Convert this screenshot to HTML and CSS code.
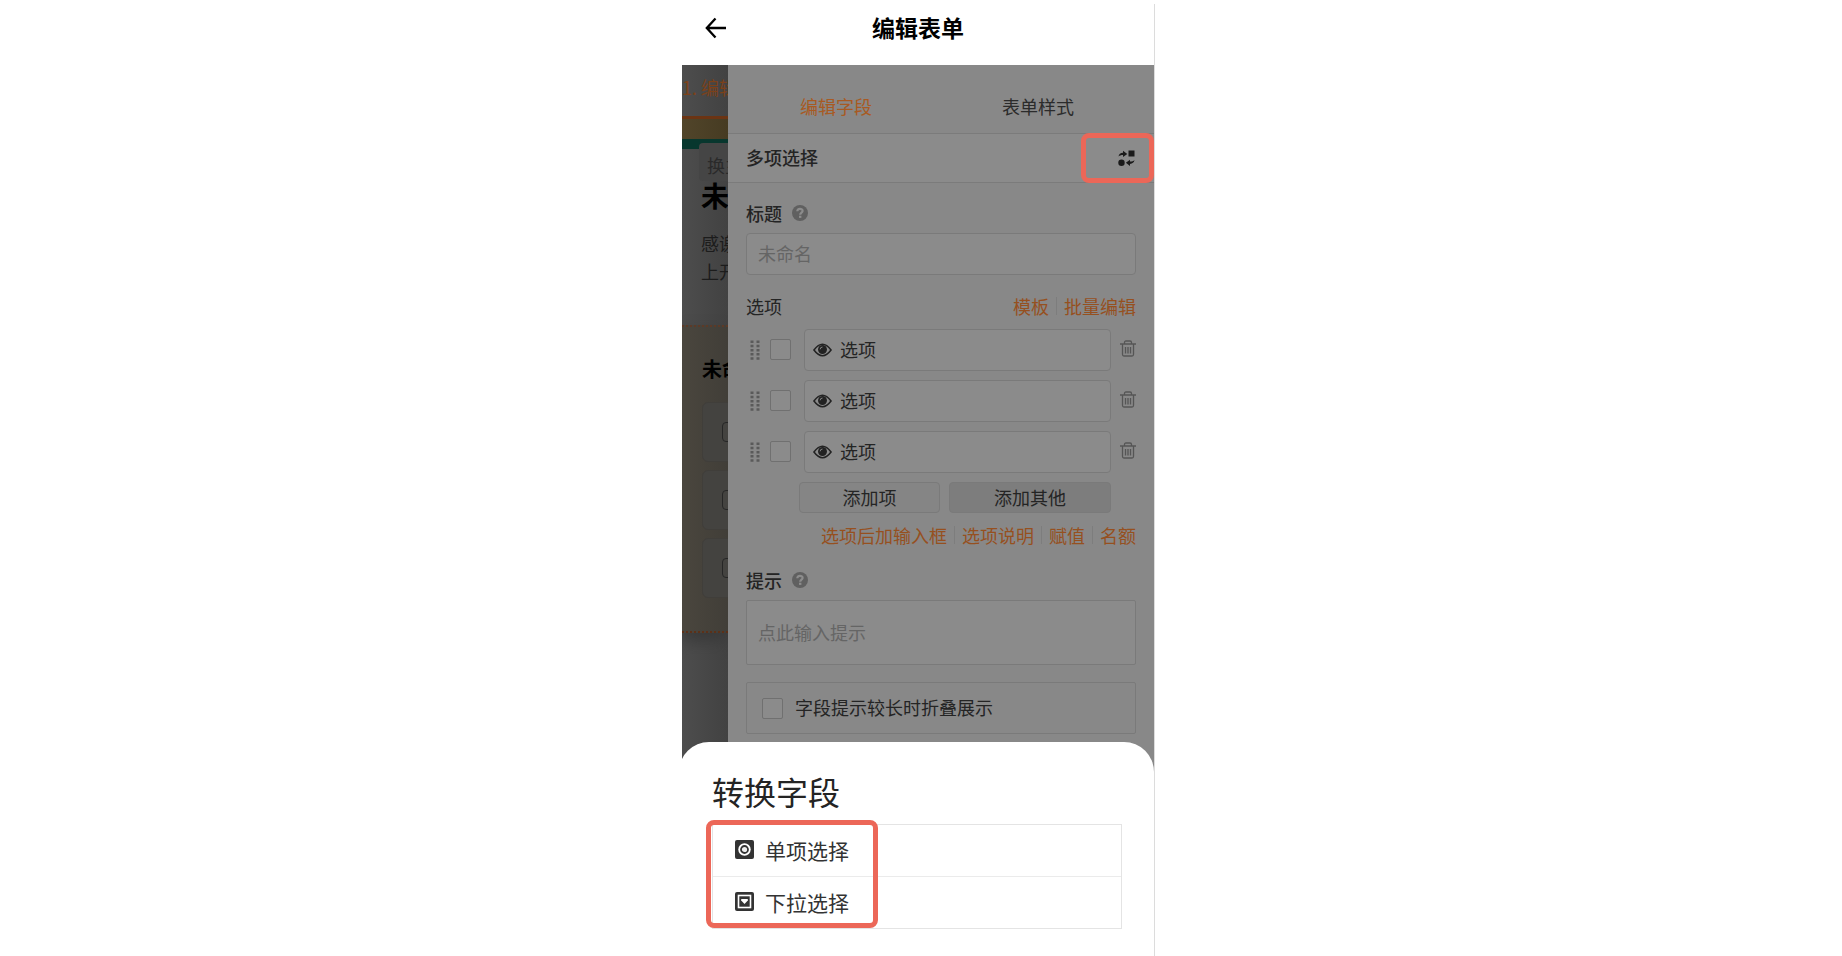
FILE: index.html
```
<!DOCTYPE html>
<html lang="zh-CN">
<head>
  <meta charset="UTF-8">
  <title>编辑表单</title>
  <meta name="viewport" content="width=device-width, initial-scale=1.0">
  <link rel="stylesheet" href="styles.css">
</head>
<body>

<!-- 公用图标 -->
<svg class="sprite" aria-hidden="true">
  <symbol id="i-help" viewBox="0 0 16 16">
    <circle cx="8" cy="8" r="8" fill="#606060"/>
    <path d="M5.300 6.200C5.300 3 10.700 3.200 10.600 6C10.500 7.600 8.200 7.700 8.200 9.700" fill="none" stroke="#8c8c8c" stroke-width="2.200"/>
    <rect x="7" y="10.700" width="2.400" height="2.200" fill="#8c8c8c"/>
  </symbol>
  <symbol id="i-drag" viewBox="0 0 10 20">
    <path d="M2 .5V20M8 .5V20" stroke="#5a5a5a" stroke-width="3" stroke-dasharray="2.500 1.700"/>
  </symbol>
  <symbol id="i-eye" viewBox="0 0 20 14">
    <path d="M1 7Q10-5 19 7Q10 19 1 7Z" fill="none" stroke="#222" stroke-width="1.600"/>
    <circle cx="10" cy="6.500" r="4.700" fill="#222"/>
    <path d="M7.500 6.300Q7.500 4 10 3.900" fill="none" stroke="#8a8a8a" stroke-width="1"/>
  </symbol>
  <symbol id="i-trash" viewBox="0 0 16 17">
    <path d="M0 4H16M4.500 4V2.500Q4.500 1 6 1H10Q11.500 1 11.500 2.500V4M2.500 4V14.500Q2.500 16 4 16H12Q13.500 16 13.500 14.500V4M5.500 7V13.500M8 7V13.500M10.500 7V13.500" fill="none" stroke="#555" stroke-width="1.300"/>
  </symbol>
</svg>

<div class="phone">
  <header class="header">
    <button class="back" type="button" aria-label="返回">
      <svg width="21" height="22" viewBox="0 0 21 22"><path d="M10.500 1.500L1.800 11L10.500 20.500M2 11H21" fill="none" stroke="#000" stroke-width="2.300"/></svg>
    </button>
    <h1>编辑表单</h1>
  </header>

  <main class="main">
    <div class="preview">
      <div class="step">1. 编辑</div>
      <div class="banner"></div>
      <div class="intro">
        <div class="skin">换主题</div>
        <h2>未命名</h2>
        <p>感谢您<br>上开始</p>
      </div>
      <div class="card">
        <h3>未命名</h3>
        <div class="choice"><i></i></div>
        <div class="choice"><i></i></div>
        <div class="choice"><i></i></div>
      </div>
    </div>

    <div class="panel">
      <nav class="tabs">
        <a class="active" href="#field">编辑字段</a>
        <a href="#style">表单样式</a>
      </nav>

      <div class="type">
        <span>多项选择</span>
        <button class="convert marked" type="button" aria-label="转换字段">
          <svg width="17" height="17" viewBox="0 0 17 17" fill="#1a1a1a">
            <rect x="10.500" y="0.500" width="6" height="6"/>
            <circle cx="3.500" cy="12.700" r="3.200"/>
            <path d="M0.500 6.500C0.800 4 2.500 2.700 5 2.700V.8L9.300 3.900L5 7V5C3 5 1.500 5.500 .5 6.500Z"/>
            <path d="M16.500 10C16 12.500 14.500 13.800 12 13.900V16L7.900 12.800L12 9.800V11.600C14 11.600 15.500 11 16.500 10Z"/>
          </svg>
        </button>
      </div>

      <form class="form">
        <div class="label">
          <label for="title">标题</label>
          <svg class="help"><use href="#i-help"/></svg>
        </div>
        <input class="text" id="title" type="text" placeholder="未命名">

        <div class="label options-label">
          <span>选项</span>
          <div class="links">
            <a href="#template">模板</a>
            <a href="#batch">批量编辑</a>
          </div>
        </div>

        <div class="option">
          <svg class="drag"><use href="#i-drag"/></svg>
          <input class="check" type="checkbox" aria-label="默认选中选项一">
          <div class="field">
            <svg class="eye"><use href="#i-eye"/></svg>
            <input type="text" value="选项" aria-label="选项一">
          </div>
          <button class="trash" type="button" aria-label="删除"><svg><use href="#i-trash"/></svg></button>
        </div>
        <div class="option">
          <svg class="drag"><use href="#i-drag"/></svg>
          <input class="check" type="checkbox" aria-label="默认选中选项二">
          <div class="field">
            <svg class="eye"><use href="#i-eye"/></svg>
            <input type="text" value="选项" aria-label="选项二">
          </div>
          <button class="trash" type="button" aria-label="删除"><svg><use href="#i-trash"/></svg></button>
        </div>
        <div class="option">
          <svg class="drag"><use href="#i-drag"/></svg>
          <input class="check" type="checkbox" aria-label="默认选中选项三">
          <div class="field">
            <svg class="eye"><use href="#i-eye"/></svg>
            <input type="text" value="选项" aria-label="选项三">
          </div>
          <button class="trash" type="button" aria-label="删除"><svg><use href="#i-trash"/></svg></button>
        </div>

        <div class="adds">
          <button type="button">添加项</button>
          <button class="other" type="button">添加其他</button>
        </div>

        <div class="links more">
          <a href="#input">选项后加输入框</a>
          <a href="#desc">选项说明</a>
          <a href="#value">赋值</a>
          <a href="#quota">名额</a>
        </div>

        <div class="label">
          <label for="hint">提示</label>
          <svg class="help"><use href="#i-help"/></svg>
        </div>
        <textarea class="text hint" id="hint" rows="1" placeholder="点此输入提示"></textarea>

        <label class="collapse">
          <input class="check" type="checkbox">
          <span>字段提示较长时折叠展示</span>
        </label>
      </form>
    </div>
  </main>

  <section class="sheet">
    <h2>转换字段</h2>
    <div class="types">
      <button type="button">
        <svg width="19" height="19" viewBox="0 0 19 19">
          <rect width="19" height="19" rx="2" fill="#333"/>
          <circle cx="9.500" cy="9.500" r="6.200" fill="#fff"/>
          <circle cx="9.500" cy="9.500" r="3.500" fill="#eee" stroke="#333" stroke-width="1.800"/>
        </svg>
        单项选择
      </button>
      <button type="button">
        <svg width="19" height="19" viewBox="0 0 19 19">
          <rect width="19" height="19" rx="2" fill="#333"/>
          <rect x="3.500" y="3.500" width="12" height="12" fill="none" stroke="#fff" stroke-width="1.600"/>
          <path d="M6.200 7H12.800V8.500L9.500 12L6.200 8.500Z" fill="#fff"/>
        </svg>
        下拉选择
      </button>
      <div class="frame"></div>
    </div>
  </section>
</div>

</body>
</html>
```

FILE: styles.css
```
* {
  box-sizing: border-box;
}

body {
  margin: 0;
  padding: 4px 5px 0 0;
  background: #fff;
  color: #242424;
  font: 18px/26px "Noto Sans CJK SC", sans-serif;
}

h1, h2, h3, p {
  margin: 0;
}

a {
  color: #96501f;
  text-decoration: none;
}

button, input, textarea {
  font: inherit;
  color: inherit;
}

button {
  padding: 0;
  border: 0;
  background: none;
}

svg {
  display: block;
  flex: none;
}

.sprite {
  position: absolute;
  width: 0;
  height: 0;
}

.phone {
  position: relative;
  display: flex;
  flex-direction: column;
  max-width: 473px;
  min-height: calc(100vh - 4px);
  margin: 0 auto;
  border-right: 1px solid #dcdcdc;
  overflow: hidden;
}

.header {
  display: grid;
  grid-template-columns: 44px 1fr 44px;
  align-items: center;
  height: 61px;
  padding-bottom: 14px;
  color: #000;
}

.header h1 {
  padding-bottom: 2px;
  font-size: 23px;
  line-height: 32px;
  text-align: center;
}

.back {
  justify-self: end;
}

.main {
  display: flex;
  flex: 1;
}

/* 左侧表单预览，被编辑面板遮住 */
.preview {
  flex: 0 0 46px;
  overflow: hidden;
  white-space: nowrap;
  background: linear-gradient(90deg, #4d4d4d, #424242);
  color: #1c1c1c;
}

.step {
  height: 54px;
  padding-top: 9px;
  border-bottom: 3px solid #6b3413;
  color: #7c4119;
}

.banner {
  height: 30px;
  border-bottom: 10px solid #08372e;
  background: linear-gradient(90deg, #51452a, #463b22);
}

.intro {
  height: 182px;
  padding-left: 19px;
}

.skin {
  width: 80px;
  height: 38px;
  margin: -6px 0 0 -2px;
  padding: 9px 8px 0;
  border-radius: 4px;
  background: #454545;
  color: #2a2a2a;
}

.intro h2 {
  margin: -4px 0 16px;
  color: #000;
  font-size: 28px;
  line-height: 36px;
}

.intro p {
  line-height: 28px;
}

.card {
  height: 308px;
  padding: 27px 0 0 20px;
  border-top: 2px dotted #5c3a28;
  border-bottom: 2px dotted #5c3018;
  background: linear-gradient(90deg, #4a463e, #413e38);
  box-shadow: 0 8px 16px #393939;
}

.card h3 {
  margin-bottom: 18px;
  color: #000;
  font-size: 20px;
  line-height: 30px;
}

.choice {
  width: 100px;
  height: 60px;
  margin-bottom: 8px;
  padding: 19px;
  border: 1px solid #403e3a;
  border-radius: 6px;
  background: #444340;
}

.choice i {
  display: block;
  width: 20px;
  height: 20px;
  border: 1px solid #262626;
  border-radius: 4px;
}

.panel {
  flex: 1;
  min-width: 0;
  background: #888;
}

.tabs {
  display: grid;
  grid-template-columns: 1fr 1fr;
  height: 69px;
  padding: 28px 15px 0 7px;
  border-bottom: 1px solid #7b7b7b;
  text-align: center;
}

.tabs a {
  color: #2b2b2b;
}

.tabs .active {
  color: #a85a22;
}

.type {
  display: flex;
  align-items: center;
  justify-content: space-between;
  height: 49px;
  padding-left: 18px;
  border-bottom: 1px solid #7b7b7b;
  background: #8b8b8b;
  font-weight: 500;
}

.type span {
  padding-bottom: 2px;
}

.marked,
.frame {
  border: 5px solid #ec6758;
  border-radius: 8px;
}

.convert {
  display: flex;
  align-items: center;
  justify-content: flex-end;
  width: 73px;
  height: 50px;
  padding-right: 14px;
}

.form {
  padding: 17px 18px 0 18px;
}

.label {
  display: flex;
  align-items: center;
  height: 26px;
  margin-bottom: 7px;
  font-weight: 500;
}

.help {
  width: 16px;
  height: 16px;
  margin-left: 10px;
}

.text {
  display: block;
  width: 100%;
  height: 42px;
  padding: 0 11px 2px;
  border: 1px solid #7a7a7a;
  border-radius: 4px;
  outline: 0;
  background: #8b8b8b;
}

.text::placeholder {
  color: #656565;
  opacity: 1;
}

.options-label {
  justify-content: space-between;
  margin: 18px 0 10px;
  font-weight: 400;
}

.links {
  display: flex;
  justify-content: flex-end;
}

.links a + a {
  margin-left: 7px;
  padding-left: 8px;
  background: linear-gradient(#7d7d7d, #7d7d7d) left center / 1px 18px no-repeat;
}

.option {
  display: flex;
  align-items: center;
  height: 41px;
  margin-bottom: 10px;
}

.drag {
  width: 10px;
  height: 20px;
  margin: 0 10px 0 4px;
}

.check {
  appearance: none;
  flex: none;
  width: 21px;
  height: 21px;
  margin: 0;
  border: 1px solid #707070;
  border-radius: 2px;
  background: #8b8b8b;
}

.field {
  display: flex;
  flex: 1;
  align-items: center;
  min-width: 0;
  height: 42px;
  margin: 0 9px 0 13px;
  padding-left: 8px;
  border: 1px solid #7a7a7a;
  border-radius: 4px;
  background: #8b8b8b;
}

.eye {
  width: 19px;
  height: 14px;
}

.field input {
  flex: 1;
  min-width: 0;
  padding: 0 8px 2px;
  border: 0;
  outline: 0;
  background: none;
}

.trash svg {
  width: 16px;
  height: 17px;
  margin-bottom: 2px;
}

.adds {
  display: flex;
  gap: 9px;
  margin: 0 25px 0 53px;
}

.adds button {
  flex: 141;
  height: 31px;
  padding-bottom: 2px;
  border: 1px solid #7a7a7a;
  border-radius: 4px;
  background: #858585;
}

.adds .other {
  flex: 162;
  background: #7d7d7d;
}

.more {
  margin: 9px 0 19px;
}

.hint {
  height: 65px;
  padding: 18px 11px;
  border-radius: 2px;
  resize: none;
  overflow: hidden;
}

.collapse {
  display: flex;
  align-items: center;
  gap: 12px;
  height: 52px;
  margin-top: 17px;
  padding: 0 15px;
  border: 1px solid #7a7a7a;
  border-radius: 2px;
}

.collapse span {
  padding-bottom: 2px;
}

/* 底部弹层 */
.sheet {
  position: absolute;
  right: 0;
  bottom: 0;
  left: -3px;
  padding: 27px 32px 27px 33px;
  border-radius: 30px 30px 0 0;
  background: #fff;
}

.sheet h2 {
  margin-bottom: 11px;
  font-size: 32px;
  font-weight: 400;
  line-height: 44px;
}

.types {
  position: relative;
  border: 1px solid #e4e4e4;
}

.types button {
  display: flex;
  align-items: center;
  gap: 11px;
  width: 100%;
  height: 51px;
  padding: 0 22px 2px;
  color: #333;
  font-size: 21px;
}

.types button + button {
  height: 52px;
  border-top: 1px solid #ebebeb;
}

.frame {
  position: absolute;
  top: -5px;
  bottom: 0;
  left: -7px;
  width: 172px;
  pointer-events: none;
}
```
